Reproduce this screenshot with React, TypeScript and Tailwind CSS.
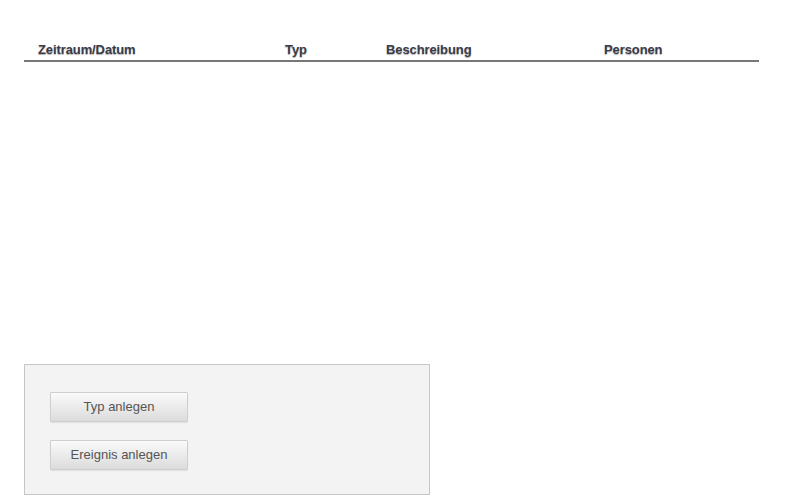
const columns = [
  { label: 'Zeitraum/Datum', width: 'w-[247px]' },
  { label: 'Typ', width: 'w-[101px]' },
  { label: 'Beschreibung', width: 'w-[218px]' },
  { label: 'Personen', width: 'w-[169px]' },
];

function ActionButton({ label }: { label: string }) {
  return (
    <button
      type="button"
      className="w-[138px] h-[30px] border border-[#cfcfcf] rounded-[1px] bg-gradient-to-b from-[#fafafa] to-[#dcdcdc] text-[13px] text-[#555] shadow-[0_1px_1px_rgba(0,0,0,0.08)]"
    >
      {label}
    </button>
  );
}

export default function App() {
  return (
    <div className="w-[793px] h-[496px] bg-white overflow-hidden pl-6 pt-[37px] font-['Liberation_Sans',Arial,sans-serif]">
      {/* Table header */}
      <div className="flex w-[735px] h-[25px] border-b-2 border-[#777]">
        {columns.map(col => (
          <div
            key={col.label}
            className={`${col.width} pl-[14px] pt-[3px] text-[13px] font-bold tracking-[-0.1px] text-[#3b3b48] [text-shadow:0_1px_1px_rgba(0,0,0,0.3)]`}
          >
            {col.label}
          </div>
        ))}
      </div>
      {/* empty table body */}
      <div className="h-[302px]" />
      {/* Actions panel */}
      <div className="w-[406px] h-[131px] border border-[#c6c6c6] bg-[#f3f3f3] pl-[25px] pt-[27px] flex flex-col gap-[18px]">
        <ActionButton label="Typ anlegen" />
        <ActionButton label="Ereignis anlegen" />
      </div>
    </div>
  );
}
